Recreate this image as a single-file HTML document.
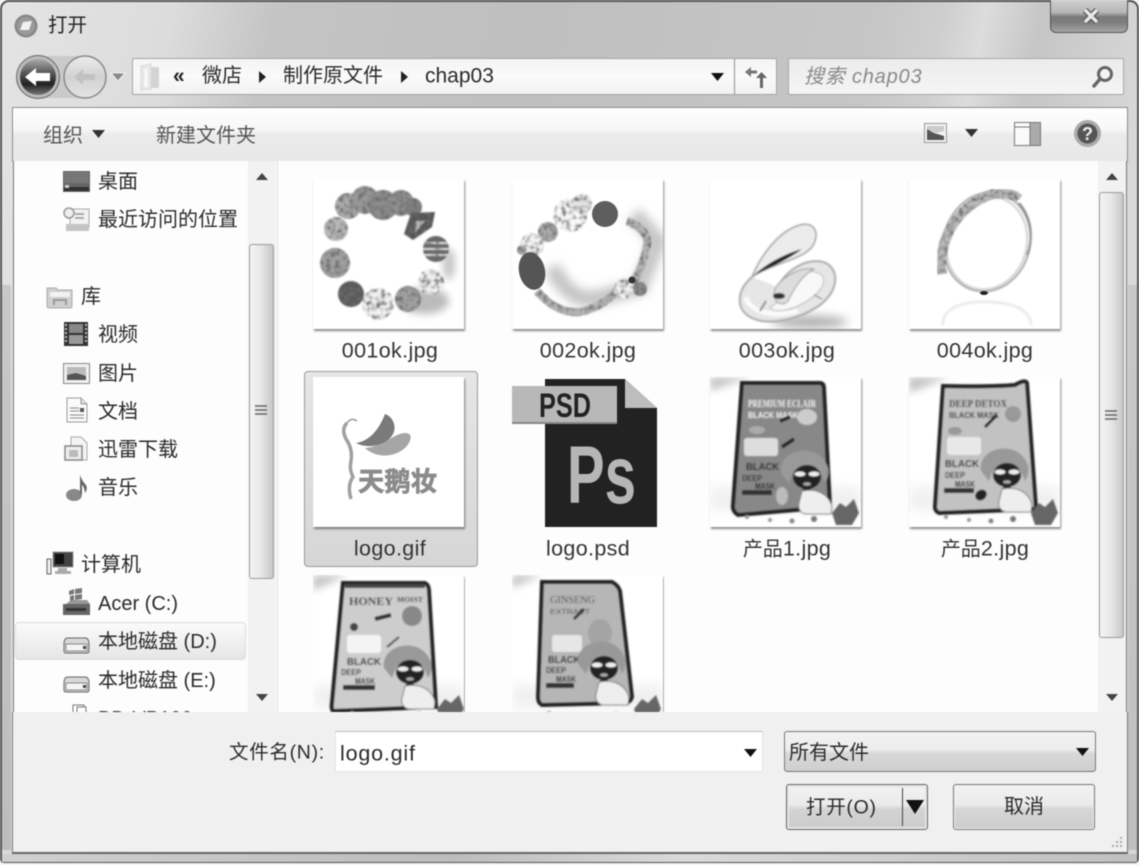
<!DOCTYPE html>
<html lang="zh-CN">
<head>
<meta charset="utf-8">
<title>打开</title>
<style>
html,body{margin:0;padding:0;width:1139px;height:865px;overflow:hidden;background:#f4f4f4}
body{position:relative;font-family:"Liberation Sans","Noto Sans CJK SC",sans-serif;color:#2a2a2a}
#w{position:absolute;left:0;top:0;width:1139px;height:865px;filter:blur(.5px);overflow:hidden}
.a{position:absolute;box-sizing:border-box}
.t{position:absolute;white-space:nowrap;line-height:1;transform:translateY(calc(-50% + 2px));font-size:20px}
.c{position:absolute;white-space:nowrap;line-height:1;transform:translate(-50%,calc(-50% + 1px));font-size:21.5px;letter-spacing:.35px;color:#333}
.c b{font-weight:normal;font-size:20px;letter-spacing:0}
svg{position:absolute;overflow:hidden}
.th{position:absolute;width:151px;height:150px;background:#fff;box-shadow:1px 2px 2px rgba(0,0,0,.45)}
.th svg{left:0;top:0}
</style>
</head>
<body>
<div id="w">
<svg width="0" height="0" style="left:0;top:0"><defs>
<filter id="tex" x="-5%" y="-5%" width="110%" height="110%"><feTurbulence type="fractalNoise" baseFrequency=".22" numOctaves="2" seed="4" result="n"/><feColorMatrix in="n" type="matrix" values="0 0 0 0 .15  0 0 0 0 .15  0 0 0 0 .15  3 0 0 0 -1.250" result="m"/><feComposite in="m" in2="SourceAlpha" operator="in" result="d"/><feMerge result="o"><feMergeNode in="SourceGraphic"/><feMergeNode in="d"/></feMerge><feGaussianBlur in="o" stdDeviation=".9"/></filter>
<g id="girl"><path d="M-26 -4C-30 -28 10 -36 20 -12 23 -6 21 2 18 6L13 -6C4 -12 -12 -12 -15 -2L-18 6Z" fill="#999"/><ellipse cx="0" cy="0" rx="14" ry="12" fill="#222"/><path d="M-2 11Q0 14 2 11" stroke="#222" stroke-width="6"/><ellipse cx="-7" cy="-3" rx="5.500" ry="2.500" fill="#eee"/><ellipse cx="7" cy="-3" rx="5.500" ry="2.500" fill="#eee"/><ellipse cx="0" cy="7" rx="4" ry="1.800" fill="#aaa"/><path d="M-5 14C8 11 22 16 25 30L24 37H-2Q-10 34 -8 26Z" fill="#eee" stroke="#777"/></g>
<g id="fl"><path d="M0 2 8 -8 14 -4 22 -12 27 2 20 14 4 14Z" fill="#666"/><circle cx="-18" cy="8" r="3" fill="#777"/><circle cx="-40" cy="10" r="2.500" fill="#888"/><circle cx="-62" cy="9" r="2" fill="#999"/><circle cx="-85" cy="6" r="2" fill="#999"/></g>
</defs></svg>
<!-- window frame -->
<div class="a" style="left:0;top:0;width:1139px;height:863px;border:2px solid #555;border-radius:9px 9px 4px 4px;background:linear-gradient(102deg,#e4e4e4 0,#dcdcdc 170px,#c4c4c4 270px,#bfbfbf 520px,#c6c6c6 860px,#cfcfcf 925px,#dcdcdc 965px,#c6c6c6 1020px,#d8d8d8 1139px)"></div>
<div class="a" style="left:2px;top:285px;width:9px;height:565px;background:linear-gradient(#c8c8c8,#bdbdbd)"></div>
<div class="a" style="left:1128px;top:285px;width:9px;height:565px;background:linear-gradient(#c8c8c8,#c0c0c0)"></div>
<div class="a" style="left:2px;top:854px;width:1135px;height:8px;background:linear-gradient(90deg,#d0d0d0,#bdbdbd 40%,#dadada 60%,#c0c0c0)"></div>

<!-- title -->
<svg style="left:13px;top:13px" width="26" height="26" viewBox="0 0 26 26"><circle cx="13" cy="13" r="11.500" fill="#888"/><circle cx="13" cy="13" r="9" fill="#9a9a9a"/><path d="M7 17 10 9 19 8 16 17Z" fill="#f2f2f2"/></svg>
<div class="t" style="left:48px;top:24px;font-size:19.500px;color:#222">打开</div>
<!-- close -->
<div class="a" style="left:1050px;top:-2px;width:78px;height:35px;border:1px solid #555;border-radius:0 0 6px 6px;background:linear-gradient(#d0d0d0 0,#b8b8b8 40%,#787878 55%,#828282 75%,#a6a6a6 100%)"></div>
<svg style="left:1079px;top:8px" width="24" height="16" viewBox="0 0 24 16"><path d="M6 2 18 14M18 2 6 14" stroke="#555" stroke-width="6"/><path d="M6 2 18 14M18 2 6 14" stroke="#e6e6e6" stroke-width="3.500"/></svg>

<!-- nav -->
<svg style="left:14px;top:52px" width="125" height="50" viewBox="0 0 125 50">
<defs>
<linearGradient id="bk" x1="0" y1="0" x2="0" y2="1"><stop offset="0" stop-color="#aaa"/><stop offset=".4" stop-color="#555"/><stop offset=".7" stop-color="#222"/><stop offset="1" stop-color="#777"/></linearGradient>
<linearGradient id="fw" x1="0" y1="0" x2="0" y2="1"><stop offset="0" stop-color="#ececec"/><stop offset=".5" stop-color="#d2d2d2"/><stop offset="1" stop-color="#e4e4e4"/></linearGradient>
</defs>
<path d="M24 4H71V46H24Z" fill="#cacaca"/>
<circle cx="71" cy="25" r="21" fill="url(#fw)" stroke="#8a8a8a" stroke-width="1.500"/>
<path d="M60 25 69 17V22H81V28H69V33Z" fill="#c2c2c2"/>
<circle cx="24" cy="25" r="21.500" fill="#bbb" stroke="#666"/>
<circle cx="24" cy="25" r="18" fill="url(#bk)"/>
<path d="M11 25 22 16V21H36V29H22V34Z" fill="#fff"/>
<path d="M97 21H111L104 29Z" fill="#888" stroke="#eee"/>
</svg>

<!-- address -->
<div class="a" style="left:132px;top:58px;width:645px;height:37px;border:1px solid #a5a5a5;border-radius:2px;background:linear-gradient(#f4f4f4,#fafafa 50%,#f2f2f2)"></div>
<div class="a" style="left:734px;top:59px;width:1px;height:35px;background:#8f8f8f"></div>
<svg style="left:138px;top:63px" width="24" height="28" viewBox="0 0 24 28"><path d="M3 3 13 1V26L3 27Z" fill="#e8e8e8" stroke="#d8d8d8"/><path d="M13 4H21V25H13Z" fill="#d4d4d4"/><path d="M8 6V24" stroke="#fafafa" stroke-width="3"/></svg>
<div class="t" style="left:173px;top:74px;font-size:21px;font-weight:bold;color:#222">«</div>
<div class="t" style="left:202px;top:74px">微店</div>
<svg style="left:258px;top:71px" width="10" height="12"><path d="M1 0 8 6 1 12Z" fill="#222"/></svg>
<div class="t" style="left:283px;top:74px">制作原文件</div>
<svg style="left:400px;top:71px" width="10" height="12"><path d="M1 0 8 6 1 12Z" fill="#222"/></svg>
<div class="t" style="left:425px;top:74px;font-size:21px">chap03</div>
<svg style="left:711px;top:73px" width="13" height="8"><path d="M0 0H13L6.500 8Z" fill="#111"/></svg>
<svg style="left:742px;top:63px" width="26" height="28" viewBox="0 0 26 28"><path d="M3 9 9 4V7.500H15V10.500H9V14Z" fill="#777"/><path d="M18 25V15H14L19.500 9 25 15H21V25Z" fill="#666"/></svg>

<!-- search -->
<div class="a" style="left:788px;top:58px;width:336px;height:37px;border:1px solid #a8a8a8;border-radius:2px;background:linear-gradient(#ececec,#f5f5f5)"></div>
<div class="t" style="left:804px;top:75px;font-size:20px;font-style:italic;color:#8a8a8a;letter-spacing:.8px">搜索 chap03</div>
<svg style="left:1091px;top:64px" width="24" height="26" viewBox="0 0 24 26"><circle cx="14" cy="10" r="6.500" fill="#f4f4f4" stroke="#666" stroke-width="3"/><path d="M9 15 3 22" stroke="#666" stroke-width="3.500" stroke-linecap="round"/></svg>

<!-- toolbar -->
<div class="a" style="left:12px;top:107px;width:1116px;height:55px;border:1px solid #8c8c8c;border-bottom-color:#bbb;background:linear-gradient(#fff 0,#f7f7f7 40%,#ebebeb 50%,#e8e8e8 100%)"></div>
<div class="t" style="left:43px;top:134px;color:#555">组织</div>
<svg style="left:92px;top:130px" width="13" height="8"><path d="M0 0H13L6.500 8Z" fill="#333"/></svg>
<div class="t" style="left:156px;top:134px;color:#555">新建文件夹</div>
<svg style="left:924px;top:123px" width="24" height="21" viewBox="0 0 24 21"><rect x=".5" y=".5" width="22" height="19" fill="#f2f2f2" stroke="#999"/><path d="M3 6 10 10 20 13V17H3Z" fill="#555"/><path d="M3 3H20V8L12 10 3 6Z" fill="#ccc"/></svg>
<svg style="left:965px;top:129px" width="13" height="8"><path d="M0 0H13L6.500 8Z" fill="#333"/></svg>
<svg style="left:1014px;top:122px" width="28" height="24" viewBox="0 0 28 24"><rect x=".5" y=".5" width="26" height="23" fill="#fafafa" stroke="#777"/><rect x="16" y="1" width="10" height="22" fill="#aaa"/><path d="M1 5H16M16 1V23" stroke="#777"/></svg>
<svg style="left:1073px;top:119px" width="29" height="29" viewBox="0 0 29 29"><circle cx="14.500" cy="14.500" r="13.500" fill="#aaa"/><circle cx="14.500" cy="14.500" r="10" fill="#555"/><text x="14.500" y="21" text-anchor="middle" font-family="Liberation Sans" font-weight="bold" font-size="18" fill="#eee">?</text></svg>

<!-- main panes -->
<div class="a" style="left:13px;top:161px;width:1114px;height:552px;background:#fdfdfd;border-left:1px solid #777;border-right:1px solid #777"></div>
<div class="a" style="left:277px;top:161px;width:1px;height:552px;background:#dedede"></div>

<!-- sidebar scrollbar -->
<div class="a" style="left:248px;top:161px;width:28px;height:552px;background:#f2f2f2"></div>
<div class="a" style="left:249px;top:244px;width:25px;height:335px;border:1px solid #9a9a9a;border-radius:3px;background:linear-gradient(90deg,#f4f4f4,#e6e6e6 50%,#c6c6c6)"></div>
<svg style="left:255px;top:172px" width="14" height="9"><path d="M7 1 13 8H1Z" fill="#444"/></svg>
<svg style="left:255px;top:693px" width="14" height="9"><path d="M7 8 13 1H1Z" fill="#444"/></svg>
<svg style="left:255px;top:404px" width="13" height="13"><path d="M0 2H12M0 6H12M0 10H12" stroke="#666" stroke-width="1.500"/></svg>

<!-- right scrollbar -->
<div class="a" style="left:1098px;top:161px;width:28px;height:552px;background:#f2f2f2"></div>
<div class="a" style="left:1099px;top:192px;width:25px;height:446px;border:1px solid #9a9a9a;border-radius:3px;background:linear-gradient(90deg,#f4f4f4,#e6e6e6 50%,#c6c6c6)"></div>
<svg style="left:1105px;top:172px" width="14" height="9"><path d="M7 1 13 8H1Z" fill="#444"/></svg>
<svg style="left:1105px;top:693px" width="14" height="9"><path d="M7 8 13 1H1Z" fill="#444"/></svg>
<svg style="left:1105px;top:409px" width="13" height="13"><path d="M0 2H12M0 6H12M0 10H12" stroke="#666" stroke-width="1.500"/></svg>

<!-- sidebar -->
<div class="a" style="left:15px;top:622px;width:231px;height:38px;border:1px solid #dcdcdc;border-radius:4px;background:linear-gradient(#fbfbfb,#e6e6e6)"></div>
<svg style="left:63px;top:170px" width="28" height="24" viewBox="0 0 28 24"><rect x="0" y="1" width="27" height="21" fill="#666"/><rect x="1" y="2" width="25" height="11" fill="#777"/><rect x="1" y="17" width="25" height="4" fill="#333"/><rect x="2" y="15" width="4" height="3" fill="#ccc"/></svg>
<div class="t" style="left:98px;top:180px">桌面</div>
<svg style="left:63px;top:207px" width="28" height="26" viewBox="0 0 28 26"><rect x="7" y="2" width="19" height="18" fill="#f2f2f2" stroke="#aaa"/><circle cx="6" cy="6" r="5" fill="#eee" stroke="#999" stroke-width="1.500"/><path d="M12 7H21M12 11H21" stroke="#aaa" stroke-width="2"/><rect x="3" y="17" width="23" height="7" fill="#c4c4c4"/></svg>
<div class="t" style="left:98px;top:218px">最近访问的位置</div>

<svg style="left:46px;top:285px" width="28" height="24" viewBox="0 0 28 24"><path d="M1 3H10L12 5H26V21Q26 23 24 23H3Q1 23 1 21Z" fill="#cfcfcf" stroke="#aaa"/><path d="M4 7H24V12H4Z" fill="#f2f2f2"/><path d="M8 20V15H20V20" fill="none" stroke="#999" stroke-width="2"/></svg>
<div class="t" style="left:81px;top:295px">库</div>
<svg style="left:64px;top:321px" width="25" height="26" viewBox="0 0 25 26"><rect x="0" y="1" width="24" height="24" fill="#333"/><rect x="5" y="3" width="14" height="9" fill="#888"/><rect x="5" y="14" width="14" height="9" fill="#999"/><path d="M2 3V23M22 3V23" stroke="#bbb" stroke-width="2" stroke-dasharray="2 2"/></svg>
<div class="t" style="left:98px;top:333px">视频</div>
<svg style="left:63px;top:363px" width="28" height="22" viewBox="0 0 28 22"><rect x=".5" y=".5" width="26" height="20" fill="#f0f0f0" stroke="#888"/><rect x="4" y="4" width="19" height="13" fill="#bbb"/><path d="M4 12 13 10 23 13V17H4Z" fill="#555"/></svg>
<div class="t" style="left:98px;top:372px">图片</div>
<svg style="left:66px;top:397px" width="23" height="27" viewBox="0 0 23 27"><path d="M1 1H15L21 7V25H1Z" fill="#fafafa" stroke="#999"/><path d="M15 1V7H21" fill="#ddd" stroke="#999"/><path d="M4 11H13M4 14H13M4 18H18M4 21H18" stroke="#888"/><rect x="14" y="11" width="4" height="4" fill="#555"/></svg>
<div class="t" style="left:98px;top:410px">文档</div>
<svg style="left:63px;top:436px" width="27" height="26" viewBox="0 0 27 26"><path d="M8 1H18L24 7V24H8Z" fill="#f4f4f4" stroke="#aaa"/><rect x="2" y="10" width="17" height="14" fill="#eee" stroke="#888" stroke-width="1.500"/><rect x="6" y="14" width="9" height="7" fill="#bbb"/></svg>
<div class="t" style="left:98px;top:448px">迅雷下载</div>
<svg style="left:65px;top:473px" width="24" height="29" viewBox="0 0 24 29"><ellipse cx="9" cy="22" rx="8" ry="6" fill="#888"/><path d="M15 21V2Q17 8 21 12 23 16 20 20 19 13 17 12V21Z" fill="#666"/></svg>
<div class="t" style="left:98px;top:486px">音乐</div>

<svg style="left:46px;top:551px" width="28" height="26" viewBox="0 0 28 26"><rect x="7" y="1" width="20" height="15" fill="#444" stroke="#999"/><rect x="9" y="3" width="9" height="10" fill="#111"/><rect x="1" y="8" width="4" height="15" fill="#eee" stroke="#666"/><path d="M12 17H21V20H25V23H9V20H12Z" fill="#aaa"/></svg>
<div class="t" style="left:81px;top:563px">计算机</div>
<svg style="left:63px;top:588px" width="28" height="28" viewBox="0 0 28 28"><path d="M0 16H27V27H0Z" fill="#666"/><path d="M3 16 8 12H24L27 16Z" fill="#999"/><path d="M6 3 11 1V6L6 7ZM12 1 19 0V5L12 6ZM7 8 11 7V12L7 13ZM12 7 19 6V11L12 12Z" fill="#777"/><rect x="3" y="20" width="20" height="3" fill="#333"/></svg>
<div class="t" style="left:98px;top:602px">Acer (C:)</div>
<svg style="left:63px;top:636px" width="28" height="18" viewBox="0 0 28 18"><path d="M1 8Q1 2 5 2H22Q26 2 26 8V15Q26 17 24 17H3Q1 17 1 15Z" fill="#d8d8d8" stroke="#666"/><rect x="3" y="8" width="21" height="7" fill="#f4f4f4" stroke="#888"/><rect x="20" y="10" width="3" height="3" fill="#444"/></svg>
<div class="t" style="left:98px;top:640px">本地磁盘 (D:)</div>
<svg style="left:63px;top:675px" width="28" height="18" viewBox="0 0 28 18"><path d="M1 8Q1 2 5 2H22Q26 2 26 8V15Q26 17 24 17H3Q1 17 1 15Z" fill="#d8d8d8" stroke="#666"/><rect x="3" y="8" width="21" height="7" fill="#f4f4f4" stroke="#888"/><rect x="20" y="10" width="3" height="3" fill="#444"/></svg>
<div class="t" style="left:98px;top:679px">本地磁盘 (E:)</div>
<svg style="left:70px;top:704px" width="18" height="9" viewBox="0 0 18 9"><rect x="3" y="1" width="11" height="12" fill="#fff" stroke="#777"/><rect x="7" y="3" width="9" height="10" fill="#fff" stroke="#777"/></svg>
<div class="a" style="left:98px;top:700px;width:140px;height:13px;overflow:hidden"><div style="position:absolute;top:9px;left:0;font-size:20px;line-height:1;white-space:nowrap">BD-VP100</div></div>

<!-- selected tile -->
<div class="a" style="left:304px;top:371px;width:174px;height:196px;border:1px solid #999;border-radius:4px;background:linear-gradient(#e6e6e6,#d6d6d6)"></div>

<!-- Row 1 -->
<div class="th" style="left:313px;top:179px">
<svg width="151" height="150" viewBox="0 0 151 150"><defs><filter id="b3" x="-50%" y="-50%" width="200%" height="200%"><feGaussianBlur stdDeviation="4"/></filter></defs>
<ellipse cx="112" cy="122" rx="24" ry="13" fill="#bbb" filter="url(#b3)"/><ellipse cx="136" cy="85" rx="6" ry="16" fill="#c4c4c4" filter="url(#b3)"/>
<g filter="url(#tex)">
<circle cx="35" cy="27" r="13" fill="#aaa"/><circle cx="52" cy="21" r="14" fill="#999"/><circle cx="70" cy="26" r="15" fill="#8c8c8c"/><circle cx="88" cy="24" r="13" fill="#8f8f8f"/><circle cx="100" cy="28" r="9" fill="#808080"/>
<path d="M98 34 122 33 119 48 100 61 91 55Z" fill="#555"/><path d="M103 42 112 42 102 54Z" fill="#bbb"/>
<circle cx="123" cy="70" r="13" fill="#666"/><path d="M111 64H135M110 70H136M111 76H135" stroke="#ddd" stroke-width="2"/>
<circle cx="118" cy="103" r="13" fill="#f2f2f2"/>
<circle cx="95" cy="120" r="13" fill="#a0a0a0"/>
<circle cx="65" cy="125" r="16" fill="#f2f2f2"/>
<circle cx="38" cy="115" r="13" fill="#5a5a5a"/>
<circle cx="22" cy="84" r="15" fill="#a0a0a0"/>
<circle cx="23" cy="50" r="12" fill="#b8b8b8"/>
</g></svg>
</div>
<div class="th" style="left:512px;top:179px">
<svg width="151" height="150" viewBox="0 0 151 150"><defs><filter id="b5" x="-30%" y="-30%" width="160%" height="160%"><feGaussianBlur stdDeviation="5"/></filter></defs>
<path d="M40 88 Q60 128 90 118 L128 108 L146 62 L122 35" fill="none" stroke="#c4c4c4" stroke-width="16" filter="url(#b5)"/>
<g filter="url(#tex)">
<path d="M25 112Q45 135 68 133 90 128 105 112L122 102Q132 85 136 62 132 48 115 42" fill="none" stroke="#b4b4b4" stroke-width="8"/>
<circle cx="58" cy="36" r="17" fill="#fafafa"/><circle cx="70" cy="25" r="10" fill="#e4e4e4"/>
<circle cx="36" cy="53" r="10" fill="#aaa"/>
<circle cx="20" cy="66" r="12" fill="#f6f6f6"/><circle cx="10" cy="71" r="5" fill="#aaa"/>
<circle cx="112" cy="110" r="10" fill="#f2f2f2"/><circle cx="128" cy="110" r="7" fill="#888"/>
</g>
<ellipse cx="20" cy="92" rx="13" ry="19" fill="#555" transform="rotate(-12 20 92)"/>
<circle cx="93" cy="35" r="13" fill="#5e5e5e"/><circle cx="120" cy="101" r="3.500" fill="#333"/>
</svg></div>
<div class="th" style="left:710px;top:179px">
<svg width="151" height="150" viewBox="0 0 151 150"><defs><filter id="b6"><feGaussianBlur stdDeviation=".9"/></filter><filter id="b7" x="-30%" y="-100%" width="160%" height="300%"><feGaussianBlur stdDeviation="5"/></filter></defs>
<ellipse cx="100" cy="143" rx="38" ry="6" fill="#aaa" filter="url(#b7)"/>
<g filter="url(#b6)">
<path d="M42 98C26 112 26 130 40 138 58 148 90 140 110 126 128 112 130 92 116 84 100 78 78 88 68 108" fill="#e6e6e6" stroke="#aaa" stroke-width="2"/>
<path d="M78 100C88 92 104 90 112 96 118 106 106 118 90 126 78 132 64 134 60 128 70 124 76 112 78 100Z" fill="#f8f8f8" stroke="#bbb"/>
<path d="M36 118C38 130 58 140 88 132" fill="none" stroke="#fafafa" stroke-width="5"/>
<path d="M42 98C50 78 68 52 90 46 106 42 110 56 102 68 90 82 62 84 42 98Z" fill="#ececec" stroke="#a0a0a0" stroke-width="1.500"/>
<path d="M44 96C60 88 76 82 92 70 78 74 60 82 44 96Z" fill="#222"/>
<path d="M66 108C74 96 92 88 104 90 92 96 84 110 78 122 70 130 60 120 66 108Z" fill="#ddd" stroke="#999"/>
<ellipse cx="69" cy="117" rx="6" ry="3" fill="#333"/>
<path d="M50 132 56 122" stroke="#888" stroke-width="2"/><path d="M104 116 112 120" stroke="#777"/>
</g></svg></div>
<div class="th" style="left:909px;top:179px">
<svg width="151" height="150" viewBox="0 0 151 150"><defs><filter id="b8"><feGaussianBlur stdDeviation=".7"/></filter></defs>
<path d="M34 146C32 124 70 120 92 124 112 126 122 136 122 146" fill="none" stroke="#ececec" stroke-width="3" filter="url(#b8)"/>
<g filter="url(#b8)">
<ellipse cx="78" cy="63" rx="43" ry="50" fill="none" stroke="#a4a4a4" stroke-width="1.800" transform="rotate(16 78 63)"/>
<ellipse cx="78" cy="64" rx="40" ry="47" fill="none" stroke="#d0d0d0" stroke-width="2" transform="rotate(16 78 63)"/>
<path d="M110 24C124 40 124 62 118 76" fill="none" stroke="#888" stroke-width="2"/>
</g>
<g filter="url(#tex)"><path d="M33 95C28 62 48 26 84 15 96 13 106 16 110 20" fill="none" stroke="#b8b8b8" stroke-width="10"/></g>
<ellipse cx="75" cy="114" rx="4" ry="2" fill="#222"/>
</svg></div>
<div class="c" style="left:390px;top:350px">001ok.jpg</div>
<div class="c" style="left:588px;top:350px">002ok.jpg</div>
<div class="c" style="left:787px;top:350px">003ok.jpg</div>
<div class="c" style="left:985px;top:350px">004ok.jpg</div>

<!-- Row 2 -->
<div class="th" style="left:313px;top:377px">
<svg width="151" height="150" viewBox="0 0 151 150">
<path d="M52 71C68 70 82 56 92 56 101 56 98 65 92 71 82 80 64 82 52 71Z" fill="#a6a6a6"/>
<path d="M43 66C58 64 67 50 72 37 81 40 85 52 78 60 70 69 54 72 43 66Z" fill="#7a7a7a"/>
<path d="M34 46Q28 52 33 62 40 72 38 84 36 92 40 100 34 108 38 122" fill="none" stroke="#a0a0a0" stroke-width="3.500"/>
<path d="M34 46Q38 40 44 44" fill="none" stroke="#999" stroke-width="1.500"/>
<text x="45" y="114" font-family="Liberation Sans,Noto Sans CJK SC,sans-serif" font-size="26.500" font-weight="bold" fill="#8b8b8b" stroke="#8b8b8b" stroke-width=".7" textLength="79" lengthAdjust="spacingAndGlyphs">天鹅妆</text>
</svg></div>
<svg style="left:511px;top:378px" width="148" height="151" viewBox="0 0 148 151">
<path d="M34 1H114L146 30V149H34Z" fill="#222"/>
<path d="M114 1 146 30H114Z" fill="#bdbdbd"/>
<rect x="1" y="8" width="105" height="38" fill="#b8b8b8"/>
<rect x="1" y="44" width="105" height="2" fill="#888"/>
<text x="28" y="39" font-family="Liberation Sans,sans-serif" font-weight="bold" font-size="34" fill="#222" textLength="52" lengthAdjust="spacingAndGlyphs">PSD</text>
<text x="56" y="125" font-family="Liberation Sans,sans-serif" font-weight="bold" font-size="82" fill="#b6b6b6" textLength="69" lengthAdjust="spacingAndGlyphs">Ps</text>
</svg>
<div class="th" style="left:710px;top:377px">
<svg width="151" height="150" viewBox="0 0 151 150"><defs><filter id="p1"><feGaussianBlur stdDeviation=".75"/></filter><filter id="p1b" x="-20%" y="-50%" width="140%" height="200%"><feGaussianBlur stdDeviation="6"/></filter></defs>
<path d="M0 0H40L0 14Z" fill="#c4c4c4" filter="url(#b3)"/><rect x="0" y="110" width="151" height="24" fill="#f0f0f0" filter="url(#p1b)"/>
<g filter="url(#p1)">
<path d="M32 6H110Q114 6 114 12L120 130 28 138Q22 134 23 128Z" fill="#888" stroke="#222" stroke-width="4"/>
<text x="38" y="30" font-family="Liberation Serif,serif" font-weight="bold" font-size="10" fill="#eee" textLength="68" lengthAdjust="spacingAndGlyphs">PREMIUM ECLAIR</text>
<text x="38" y="41" font-family="Liberation Sans,sans-serif" font-weight="bold" font-size="8" fill="#eee" textLength="50" lengthAdjust="spacingAndGlyphs">BLACK MASK</text>
<ellipse cx="97" cy="40" rx="10" ry="8" fill="#ccc"/><rect x="34" y="61" width="34" height="18" rx="3" fill="#ddd"/><ellipse cx="47" cy="53" rx="8" ry="4" fill="#aaa"/><path d="M70 44 80 40M72 70 84 62" stroke="#222" stroke-width="3.500"/>
<text x="36" y="93" font-family="Liberation Sans,sans-serif" font-weight="bold" font-size="10" fill="#222" textLength="33" lengthAdjust="spacingAndGlyphs">BLACK</text>
<text x="32" y="104" font-family="Liberation Sans,sans-serif" font-weight="bold" font-size="8" fill="#333" textLength="20" lengthAdjust="spacingAndGlyphs">DEEP</text>
<text x="45" y="112" font-family="Liberation Sans,sans-serif" font-weight="bold" font-size="8" fill="#222" textLength="20" lengthAdjust="spacingAndGlyphs">MASK</text>
<rect x="32" y="113" width="30" height="5" fill="#333"/>
<ellipse cx="72" cy="119" rx="6" ry="9" fill="#bbb"/>
<use href="#girl" x="97" y="100"/><use href="#fl" x="122" y="134"/>
</g></svg></div>
<div class="th" style="left:909px;top:377px">
<svg width="151" height="150" viewBox="0 0 151 150"><defs><filter id="p2"><feGaussianBlur stdDeviation=".75"/></filter></defs>
<path d="M0 0H40L0 16Z" fill="#c4c4c4" filter="url(#b3)"/><rect x="0" y="110" width="151" height="24" fill="#f0f0f0" filter="url(#p1b)"/>
<g filter="url(#p2)">
<path d="M34 9Q80 10 106 8 116 2 118 6L127 132 30 136Q26 134 26 130Z" fill="#c2c2c2" stroke="#222" stroke-width="4"/>
<text x="40" y="30" font-family="Liberation Serif,serif" font-weight="bold" font-size="10" fill="#333" textLength="58" lengthAdjust="spacingAndGlyphs">DEEP DETOX</text>
<text x="40" y="41" font-family="Liberation Sans,sans-serif" font-weight="bold" font-size="8" fill="#333" textLength="50" lengthAdjust="spacingAndGlyphs">BLACK MASK</text>
<circle cx="104" cy="37" r="8" fill="#999"/><ellipse cx="46" cy="54" rx="7" ry="4" fill="#999"/><rect x="38" y="60" width="34" height="18" rx="3" fill="#e8e8e8"/><path d="M76 50 88 38" stroke="#222" stroke-width="3"/>
<text x="36" y="90" font-family="Liberation Sans,sans-serif" font-weight="bold" font-size="10" fill="#222" textLength="34" lengthAdjust="spacingAndGlyphs">BLACK</text>
<text x="36" y="101" font-family="Liberation Sans,sans-serif" font-weight="bold" font-size="8" fill="#333" textLength="20" lengthAdjust="spacingAndGlyphs">DEEP</text>
<text x="46" y="110" font-family="Liberation Sans,sans-serif" font-weight="bold" font-size="8" fill="#222" textLength="20" lengthAdjust="spacingAndGlyphs">MASK</text>
<rect x="35" y="111" width="30" height="5" fill="#333"/>
<ellipse cx="72" cy="118" rx="6" ry="5" fill="#222" transform="rotate(-35 72 118)"/>
<use href="#girl" x="98" y="98"/><use href="#fl" x="122" y="134"/>
</g></svg></div>
<div class="c" style="left:390px;top:548px">logo.gif</div>
<div class="c" style="left:588px;top:548px">logo.psd</div>
<div class="c" style="left:787px;top:548px"><b>产品</b>1.jpg</div>
<div class="c" style="left:985px;top:548px"><b>产品</b>2.jpg</div>

<!-- Row 3 -->
<div class="a" style="left:313px;top:575px;width:152px;height:137px;overflow:hidden">
<div class="th" style="left:0;top:0">
<svg width="151" height="150" viewBox="0 0 151 150"><defs><filter id="p3"><feGaussianBlur stdDeviation=".8"/></filter></defs>
<path d="M0 0H34L0 16Z" fill="#c4c4c4" filter="url(#b3)"/><rect x="0" y="110" width="151" height="24" fill="#f0f0f0" filter="url(#p1b)"/>
<g filter="url(#p3)">
<path d="M30 8H112Q116 10 116 16L123 132 20 136Q18 134 19 128Z" fill="#cdcdcd" stroke="#222" stroke-width="4"/>
<rect x="32" y="9" width="80" height="4" fill="#444"/>
<text x="36" y="30" font-family="Liberation Serif,serif" font-weight="bold" font-size="12" fill="#333" textLength="44" lengthAdjust="spacingAndGlyphs">HONEY</text>
<text x="84" y="27" font-family="Liberation Serif,serif" font-weight="bold" font-size="7" fill="#333" textLength="26" lengthAdjust="spacingAndGlyphs">MOIST</text>
<circle cx="99" cy="41" r="10" fill="#888"/><path d="M62 44 78 40" stroke="#333" stroke-width="4"/><circle cx="41" cy="52" r="4" fill="#444"/>
<rect x="34" y="60" width="34" height="18" rx="3" fill="#f4f4f4"/><path d="M74 72 86 62" stroke="#444" stroke-width="2"/>
<text x="34" y="90" font-family="Liberation Sans,sans-serif" font-weight="bold" font-size="10" fill="#222" textLength="34" lengthAdjust="spacingAndGlyphs">BLACK</text>
<text x="28" y="100" font-family="Liberation Sans,sans-serif" font-weight="bold" font-size="8" fill="#333" textLength="20" lengthAdjust="spacingAndGlyphs">DEEP</text>
<text x="42" y="109" font-family="Liberation Sans,sans-serif" font-weight="bold" font-size="8" fill="#222" textLength="20" lengthAdjust="spacingAndGlyphs">MASK</text>
<rect x="30" y="110" width="32" height="5" fill="#333"/>
<use href="#girl" x="97" y="97"/><use href="#fl" x="124" y="132"/>
</g></svg></div></div>
<div class="a" style="left:512px;top:575px;width:152px;height:137px;overflow:hidden">
<div class="th" style="left:0;top:0">
<svg width="151" height="150" viewBox="0 0 151 150"><defs><filter id="p4"><feGaussianBlur stdDeviation=".8"/></filter></defs>
<path d="M0 0H30L0 13Z" fill="#c4c4c4" filter="url(#b3)"/><rect x="0" y="110" width="151" height="24" fill="#f0f0f0" filter="url(#p1b)"/>
<g filter="url(#p4)">
<path d="M30 7H100Q106 10 108 16L120 122Q118 128 112 128L30 130Q26 128 26 122Z" fill="#b6b6b6" stroke="#222" stroke-width="4"/>
<text x="38" y="28" font-family="Liberation Serif,serif" font-size="10" fill="#444" textLength="45" lengthAdjust="spacingAndGlyphs">GINSENG</text>
<text x="38" y="39" font-family="Liberation Sans,sans-serif" font-size="7" fill="#444" textLength="40" lengthAdjust="spacingAndGlyphs">EXTRACT</text>
<path d="M62 44 72 34" stroke="#333" stroke-width="3"/><rect x="40" y="60" width="30" height="17" rx="3" fill="#e6e6e6"/><ellipse cx="88" cy="58" rx="12" ry="14" fill="#a4a4a4"/>
<text x="36" y="88" font-family="Liberation Sans,sans-serif" font-weight="bold" font-size="10" fill="#222" textLength="32" lengthAdjust="spacingAndGlyphs">BLACK</text>
<text x="34" y="98" font-family="Liberation Sans,sans-serif" font-weight="bold" font-size="8" fill="#333" textLength="20" lengthAdjust="spacingAndGlyphs">DEEP</text>
<text x="44" y="107" font-family="Liberation Sans,sans-serif" font-weight="bold" font-size="8" fill="#222" textLength="20" lengthAdjust="spacingAndGlyphs">MASK</text>
<rect x="34" y="108" width="28" height="5" fill="#333"/>
<use href="#girl" x="92" y="93"/><use href="#fl" x="122" y="132"/>
</g></svg></div></div>

<!-- bottom panel -->
<div class="a" style="left:12px;top:712px;width:1116px;height:142px;background:#f0f0f0;border:1px solid #777;border-top:0;border-bottom:2px solid #666"></div>
<div class="t" style="left:229px;top:751px;font-size:19.500px;letter-spacing:.7px">文件名(N):</div>
<div class="a" style="left:335px;top:731px;width:428px;height:41px;background:#fff;border:1px solid #e2e2e2;border-top-color:#bbb"></div>
<div class="t" style="left:340px;top:752px;font-size:21.500px;letter-spacing:.8px">logo.gif</div>
<svg style="left:744px;top:749px" width="13" height="8"><path d="M0 0H13L6.500 8Z" fill="#111"/></svg>
<div class="a" style="left:784px;top:731px;width:312px;height:41px;border:1px solid #777;border-radius:3px;background:linear-gradient(#f2f2f2,#ededed 45%,#d8d8d8 55%,#cfcfcf)"></div>
<div class="t" style="left:789px;top:751px">所有文件</div>
<svg style="left:1076px;top:748px" width="13" height="8"><path d="M0 0H13L6.500 8Z" fill="#111"/></svg>
<div class="a" style="left:786px;top:784px;width:142px;height:46px;border:1px solid #666;border-radius:3px;box-shadow:inset 0 0 0 2px #e4e4e4;background:linear-gradient(#f2f2f2,#ebebeb 45%,#d4d4d4 55%,#cbcbcb)"></div>
<div class="a" style="left:902px;top:788px;width:1px;height:38px;background:#444"></div>
<div class="t" style="left:806px;top:806px;font-size:19.500px;letter-spacing:.7px">打开(O)</div>
<svg style="left:906px;top:800px" width="18" height="14"><path d="M0 0H18L9 14Z" fill="#111"/></svg>
<div class="a" style="left:953px;top:784px;width:142px;height:46px;border:1px solid #777;border-radius:3px;box-shadow:inset 0 0 0 1px #f2f2f2;background:linear-gradient(#f2f2f2,#ebebeb 45%,#d6d6d6 55%,#cdcdcd)"></div>
<div class="t" style="left:1004px;top:805px">取消</div>
<svg style="left:1107px;top:836px" width="16" height="14"><path d="M13 1h2v2h-2zM9 5h2v2h-2zM13 5h2v2h-2zM5 9h2v2h-2zM9 9h2v2h-2zM13 9h2v2h-2z" fill="#aaa"/></svg>
</div>
</body>
</html>
